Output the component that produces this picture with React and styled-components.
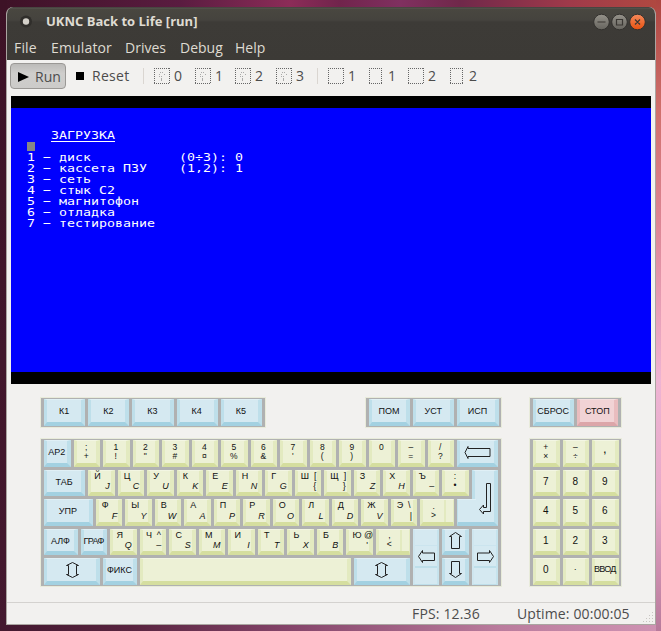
import React from 'react';
import styled, { createGlobalStyle } from 'styled-components';

const Global = createGlobalStyle`
  *{box-sizing:border-box}
  body{margin:0}
`;

const Desktop = styled.div`
  width:661px;height:631px;overflow:hidden;padding:7px 4px 6px 6px;
  background:
    linear-gradient(#3d1226,#44192f) left / 7px 631px no-repeat,
    linear-gradient(180deg,#ad4540 0,#d0706c 110px,#dc8594 220px,#efb4d3 380px,#e7a8c8 500px,#b87a9b 631px) right / 5px 631px no-repeat,
    linear-gradient(90deg,#3d1226 0,#5a1c40 180px,#8c2c58 290px,#71244c 340px,#803060 400px,#70284a 460px,#a03a4a 570px,#b04940 661px) top / 661px 20px no-repeat,
    linear-gradient(90deg,#43182f 0,#58243f 130px,#85456a 290px,#ba7c9d 500px,#cf93b3 661px) bottom / 661px 10px no-repeat,
    #f1f0ee;
`;
const Window = styled.div`
  width:650px;height:618px;display:flex;flex-direction:column;
  background:#f2f1ef;border-radius:7px 7px 0 0;overflow:hidden;
  border:1px solid #aaa5a1;border-width:0 1px 1px;
  font-family:"Open Sans","Noto Sans",sans-serif;color:#4c4c4c;
`;
const Header = styled.div`
  height:53px;flex:none;margin:0 -1px;
  background:linear-gradient(#35332f 0,#5a5852 1px,#494740 2px,#45433e 13px,#3d3b37 15px,#3c3a36 100%);
`;
const TitleBar = styled.div`
  height:29px;display:flex;align-items:center;padding:0 9px 0 13px;
`;
const AppDot = styled.svg`width:14px;height:14px;margin-right:13px;`;
const Text = styled.span`
  display:block;white-space:nowrap;line-height:20px;
  width:${p => p.$w}px;
  font-size:${p => p.$size || 14}px;
  letter-spacing:${p => p.$ls || 0}px;
`;
const Title = styled(Text)`font-weight:700;color:#dfdbd2;flex:1;padding-bottom:1px;`;
const WinButtons = styled.svg`width:56px;height:20px;`;
const MenuBar = styled.div`
  height:24px;display:flex;align-items:center;padding-left:8px;color:#dfdbd2;
`;
const Toolbar = styled.div`
  height:36px;flex:none;display:flex;align-items:center;padding:0 0 4px 3px;
`;
const RunButton = styled.div`
  width:56px;height:26px;display:flex;align-items:center;padding:1px 0 0 7px;
  border:1px solid #9a9895;border-radius:4px;
  background:linear-gradient(#bcbbb9,#cfcecc 40%,#cccbc9);
`;
const ToolIcon = styled.svg`
  width:${p => p.$w}px;height:${p => p.$h}px;margin-right:${p => p.$mr || 0}px;flex:none;
`;
const Separator = styled.i`
  width:1px;height:16px;background:#dad6d1;margin:0 ${p => p.$r}px 0 0;
`;
const Screen = styled.div`
  width:640px;height:288px;flex:none;margin:0 4px;background:#0000fe;
  border:solid #000;border-width:12px 0;padding:22px 0 0 16px;
  color:#fff;font:11px/11px "DejaVu Sans Mono",monospace;
`;
const Line = styled.div`
  height:11px;white-space:pre;transform-origin:0 0;transform:scaleX(1.208);
`;
const Underlined = styled.span`text-decoration:underline;text-underline-offset:2px;text-decoration-thickness:1px;`;
const Cursor = styled.div`width:8px;height:9px;margin:1px 0;background:#868686;`;

const KeyboardArea = styled.div`
  flex:1;display:grid;grid-template-columns:460px 92px;column-gap:29px;
  grid-template-rows:30px 149px;row-gap:11px;padding:14px 0 0 34px;
`;
const TopRow = styled.div`display:flex;justify-content:space-between;`;
const Bank = styled.div`
  display:grid;background:#b0b1b1;outline:1px solid #e8ebda;
  grid-template-columns:repeat(${p => p.$cols},${p => p.$cw}px);
  grid-template-rows:repeat(${p => p.$rows},29.5px);
  padding:1px 0 0 3px;width:${p => p.$w}px;
  height:${p => p.$hh}px;
`;
const tones = {
  y: ['#edf1d6', '#f3f6e3', '#e3eac0', '#d5de9f'],
  b: ['#d5e9f1', '#e0f0f6', '#bedfea', '#a3d1e1'],
  r: ['#f1d3d5', '#f5dfe0', '#e9bdbf', '#dca6a9'],
};
const KeyCap = styled.div`
  grid-column:${p => p.$c} / span ${p => p.$s};
  grid-row:${p => p.$r} / span ${p => p.$rs || 1};
  margin:0 3px 3px 0;position:relative;
  display:flex;align-items:center;justify-content:center;
  padding-top:${p => p.$dy || 0}px;padding-bottom:${p => p.$up || 0}px;
  background:${p => tones[p.$t][0]};
  border-style:solid;border-width:1px 4px 4px 3px;
  border-color:${p => `${tones[p.$t][1]} ${tones[p.$t][2]} ${tones[p.$t][3]} ${tones[p.$t][2]}`};
  font:${p => p.$f || 9}px/9px "Liberation Sans",Arial,sans-serif;color:#111;white-space:nowrap;
  letter-spacing:${p => p.$ls || 0}px;
`;
/* Double-height cap: its relief ends above a flat lower part. */
const TallCap = styled(KeyCap)`
  border-width:1px 2px 1px 2px;border-bottom-color:#bedfea;border-left-color:#cfe6ef;border-right-color:#c6e3ed;
  background:linear-gradient(#d5e9f1 0 15px,#cbe4ee 15px 16px,#d5e9f1 16px 36px,#bedfea 36px 38px,#d5e9f1 38px);
`;
/* Wide cap with a flat strip at its right side. */
const WideCap = styled(KeyCap)`
  border-right-width:1px;padding-right:9px;
  background:linear-gradient(270deg,#edf1d6 0 7px,#e3eac0 7px 9px,#edf1d6 9px);
`;
const EnterTail = styled(KeyCap)`border-right:0;margin-right:-4px;border-left-width:1px;`;
const Stack = styled.div`display:grid;justify-items:center;grid-auto-rows:9px;line-height:9px;`;
const Upper = styled.span`position:absolute;left:3px;top:1px;white-space:pre;`;
const Lower = styled.span`
  position:absolute;right:1px;bottom:1px;font-style:${p => (p.$i ? 'italic' : 'normal')};
`;
const Arrow = styled.svg`
  width:${p => p.$w}px;height:${p => p.$h}px;flex:none;fill:none;stroke:#222;stroke-width:1;margin-left:1px;
`;
const StatusBar = styled.div`
  height:22px;flex:none;display:flex;align-items:center;padding-left:405px;
  border-top:1px solid #d4d2cf;position:relative;
`;
const Grip = styled.svg`position:absolute;right:1px;bottom:1px;width:12px;height:12px;`;

const arrows = {
  back: [27, 13, 'M1 6.5 L4 .5 V2.5 H26 V10.5 H4 V12.5 Z'],
  left: [17, 13, 'M.5 6.5 L4.5 .5 V3 H16.5 V10.5 H4.5 V12.5 Z'],
  right: [17, 13, 'M16.5 6.5 L12.5 .5 V3 H.5 V10.5 H12.5 V12.5 Z'],
  up: [13, 17, 'M6.5 .5 L12.5 4.5 H10.5 V16.5 H2.5 V4.5 H.5 Z'],
  down: [13, 17, 'M6.5 16.5 L12.5 12.5 H10.5 V.5 H2.5 V12.5 H.5 Z'],
  shift: [13, 16, 'M6.5 .5 L12.5 3.5 H10.5 V12.5 H12.5 L6.5 15.5 L.5 12.5 H2.5 V3.5 H.5 Z'],
  enter: [13, 32, 'M7.5 .5 H11.5 V28.5 H4.5 V31 L.5 26.5 L4.5 22 V24.5 H7.5 Z'],
};
const ArrowIcon = ({ name }) => {
  const [w, h, d] = arrows[name];
  return <Arrow $w={w} $h={h} viewBox={`0 0 ${w} ${h}`}><path d={d} /></Arrow>;
};

function Key({ as: Cap = KeyCap, c, s = 4, r = 1, rs, t = 'y', label, stack, pair, arrow, f, ls, dy, up }) {
  return (
    <Cap $c={c} $s={s} $r={r} $rs={rs} $t={t} $f={f || (stack ? 8.5 : 9)} $ls={ls} $up={up} $dy={dy ?? (label && t !== 'y' ? 2 : 0)}>
      {label}
      {stack && <Stack><span>{stack[0]}</span><span>{stack[1]}</span></Stack>}
      {pair && <><Upper>{pair[0]}</Upper><Lower $i={/[A-Z]/.test(pair[1])}>{pair[1]}</Lower></>}
      {arrow && <ArrowIcon name={arrow} />}
    </Cap>
  );
}

const digits = [[';', '+'], ['1', '!'], ['2', '"'], ['3', '#'], ['4', '¤'], ['5', '%'], ['6', '&'], ['7', "'"], ['8', '('], ['9', ')'], ['0', '\u00a0'], ['–', '='], ['/', '?']];
const row2 = [['Й', 'J'], ['Ц', 'C'], ['У', 'U'], ['К', 'K'], ['Е', 'E'], ['Н', 'N'], ['Г', 'G'], ['Ш  [', '{'], ['Щ  ]', '}'], ['З', 'Z'], ['Х', 'H'], ['Ъ', '–']];
const row3 = [['Ф', 'F'], ['Ы', 'Y'], ['В', 'W'], ['А', 'A'], ['П', 'P'], ['Р', 'R'], ['О', 'O'], ['Л', 'L'], ['Д', 'D'], ['Ж', 'V'], ['Э  \\', '|']];
const row4 = [['Я', 'Q'], ['Ч  ^', '–'], ['С', 'S'], ['М', 'M'], ['И', 'I'], ['Т', 'T'], ['Ь', 'X'], ['Б', 'B'], ['Ю @', "'"]];
const pad = ['7', '8', '9', '4', '5', '6', '1', '2', '3', '0', '·', 'ВВОД'];

const Slot = ({ w, disk, mr }) => (
  <ToolIcon $w={w} $h={16} $mr={mr} viewBox={`0 0 ${w} 16`} fill="none" stroke="#666" strokeDasharray="1 1">
    <path d={`M0 .5H${w}M0 15.5H${w}M.5 0V16M${w - .5} 0V16`} />
    {disk && <path d="M6 4.5H10M5.5 6V9M10.5 6V8M7 11.5H9M7.5 8V13" stroke="#aaa" />}
  </ToolIcon>
);

export default function App() {
  return (
    <Desktop>
      <Global />
      <Window>
        <Header>
          <TitleBar>
            <AppDot viewBox="0 0 14 14"><circle cx="7" cy="6.5" r="6" fill="#302e2b" /><circle cx="7" cy="6.5" r="3.2" fill="#d4d0c9" /></AppDot>
            <Title $size={13}>UKNC Back to Life [run]</Title>
            <WinButtons viewBox="0 0 56 20">
              <defs>
                <linearGradient id="grey" x2="0" y2="1"><stop stopColor="#95928a" /><stop offset="1" stopColor="#66645e" /></linearGradient>
                <linearGradient id="orange" x2="0" y2="1"><stop stopColor="#f58a5c" /><stop offset="1" stopColor="#e8510f" /></linearGradient>
              </defs>
              <circle cx="10.5" cy="10" r="7.8" fill="url(#grey)" stroke="#33312e" />
              <circle cx="28.5" cy="10" r="7.8" fill="url(#grey)" stroke="#33312e" />
              <circle cx="46.5" cy="10" r="7.8" fill="url(#orange)" stroke="#33312e" />
              <path d="M6.5 10H14.5M25.5 7.5H31.5V13H25.5ZM44 7.5L49 12.5M49 7.5L44 12.5" fill="none" stroke="#3a3733" strokeWidth="1.2" />
            </WinButtons>
          </TitleBar>
          <MenuBar>
            <Text $w={37} $ls={0.15}>File</Text><Text $w={74} $ls={0.15}>Emulator</Text><Text $w={55}>Drives</Text><Text $w={55}>Debug</Text><Text $w={40}>Help</Text>
          </MenuBar>
        </Header>
        <Toolbar>
          <RunButton>
            <ToolIcon $w={11} $h={10} $mr={6} viewBox="0 0 11 10"><path d="M0 0L11 5L0 10Z" /></ToolIcon>
            <Text>Run</Text>
          </RunButton>
          <ToolIcon $w={18} $h={8} $mr={8} viewBox="0 0 18 8"><path d="M10 0H18V8H10Z" /></ToolIcon>
          <Text $w={51} $ls={0.3}>Reset</Text>
          <Separator $r={10} />
          <Slot w={16} disk mr={4} /><Text $w={21}>0</Text>
          <Slot w={16} disk mr={4} /><Text $w={20}>1</Text>
          <Slot w={16} disk mr={4} /><Text $w={21}>2</Text>
          <Slot w={16} disk mr={4} /><Text $w={21}>3</Text>
          <Separator $r={10} />
          <Slot w={16} mr={4} /><Text $w={21}>1</Text>
          <Slot w={13} mr={6} /><Text $w={20}>1</Text>
          <Slot w={16} mr={4} /><Text $w={22}>2</Text>
          <Slot w={13} mr={6} /><Text $w={20}>2</Text>
        </Toolbar>
        <Screen>
          <Line>{'   '}<Underlined>ЗАГРУЗКА</Underlined></Line>
          <Cursor />
          <Line>1 − диск           (0÷3): 0</Line>
          <Line>2 − кассета ПЗУ    (1,2): 1</Line>
          <Line>3 − сеть</Line>
          <Line>4 − стык С2</Line>
          <Line>5 − магнитофон</Line>
          <Line>6 − отладка</Line>
          <Line>7 − тестирование</Line>
        </Screen>
        <KeyboardArea>
          <TopRow>
            <Bank $cols={5} $cw={44.2} $rows={1} $w={224} $hh={29}>
              {['К1', 'К2', 'К3', 'К4', 'К5'].map((k, i) => <Key key={k} c={i + 1} s={1} t="b" label={k} />)}
            </Bank>
            <Bank $cols={3} $cw={44.2} $rows={1} $w={135} $hh={29}>
              {['ПОМ', 'УСТ', 'ИСП'].map((k, i) => <Key key={k} c={i + 1} s={1} t="b" label={k} />)}
            </Bank>
          </TopRow>
          <Bank $cols={2} $cw={44.2} $rows={1} $w={91} $hh={29}>
            <Key c={1} s={1} t="b" label="СБРОС" />
            <Key c={2} s={1} t="r" label="СТОП" />
          </Bank>
          <Bank $cols={62} $cw={7.375} $rows={5} $w={460} $hh={147}>
            <Key c={1} t="b" label="АР2" />
            {digits.map((k, i) => <Key key={i} c={5 + i * 4} stack={k} />)}
            <Key c={57} s={6} t="b" arrow="back" dy={2} />
            <Key c={1} s={6} r={2} t="b" label="ТАБ" />
            {row2.map((k, i) => <Key key={i} c={7 + i * 4} r={2} pair={k} />)}
            <Key c={55} r={2} stack={[':', '•']} />
            <Key c={59} r={2} rs={2} t="b" arrow="enter" dy={6} />
            <EnterTail $c={57} $s={2} $r={3} $t="b" />
            <Key c={1} s={7} r={3} t="b" label="УПР" />
            {row3.map((k, i) => <Key key={i} c={8 + i * 4} r={3} pair={k} />)}
            <Key as={WideCap} c={52} s={5} r={3} stack={['.', '>']} />
            <Key c={1} s={5} r={4} t="b" label="АЛФ" />
            <Key c={6} r={4} t="b" label="ГРАФ" ls={-0.7} />
            {row4.map((k, i) => <Key key={i} c={10 + i * 4} r={4} pair={k} />)}
            <Key as={WideCap} c={46} s={5} r={4} stack={[',', '<']} />
            <Key as={TallCap} c={51} r={4} rs={2} t="b" arrow="left" />
            <Key c={55} r={4} t="b" arrow="up" />
            <Key as={TallCap} c={59} r={4} rs={2} t="b" arrow="right" />
            <Key c={1} s={8} r={5} t="b" arrow="shift" />
            <Key c={9} s={5} r={5} t="b" label="ФИКС" />
            <Key c={14} s={29} r={5} />
            <Key c={43} s={8} r={5} t="b" arrow="shift" />
            <Key c={55} r={5} t="b" arrow="down" />
          </Bank>
          <Bank $cols={3} $cw={29.5} $rows={5} $w={91} $hh={147}>
            <Key c={1} s={1} stack={['+', '×']} />
            <Key c={2} s={1} stack={['–', '÷']} />
            <Key c={3} s={1} label="," f={13} up={7} />
            {pad.map((k, i) => <Key key={k} c={i % 3 + 1} s={1} r={Math.floor(i / 3) + 2} label={k} f={i < 10 ? 10 : 9} ls={i === 11 ? -0.8 : 0} />)}
          </Bank>
        </KeyboardArea>
        <StatusBar>
          <Text $w={105} $ls={0.15}>FPS: 12.36</Text><Text $ls={0.12}>Uptime: 00:00:05</Text>
          <Grip viewBox="0 0 12 12" fill="none" stroke="#c9c6c2" strokeDasharray="1 2"><path d="M10 1.5H12M7 4.5H12M4 7.5H12M1 10.5H12" /></Grip>
        </StatusBar>
      </Window>
    </Desktop>
  );
}
